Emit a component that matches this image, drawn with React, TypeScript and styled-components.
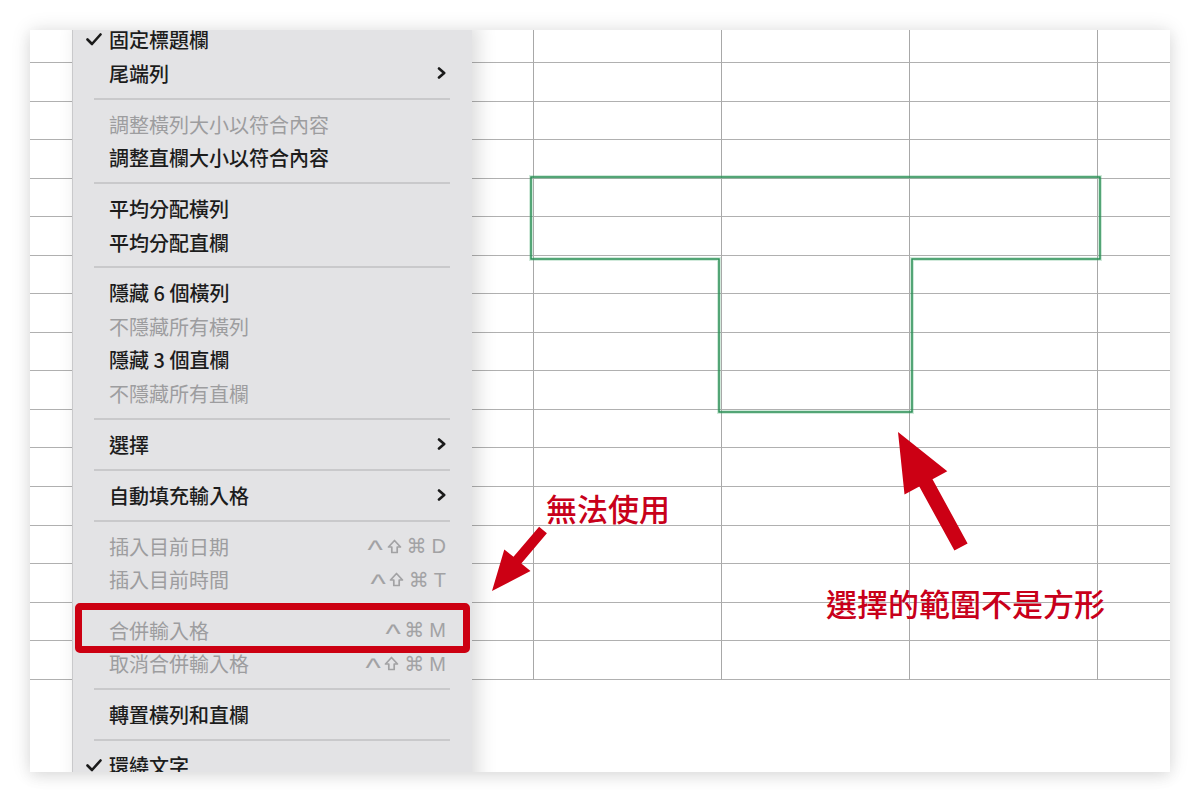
import React from 'react';
import styled, { createGlobalStyle } from 'styled-components';

type MenuEntry =
  | { kind: 'item'; label: string; checked?: boolean; disabled?: boolean; submenu?: boolean; keys?: string[] }
  | { kind: 'sep' };

const menu: MenuEntry[] = [
  { kind: 'item', label: '固定標題欄', checked: true },
  { kind: 'item', label: '尾端列', submenu: true },
  { kind: 'sep' },
  { kind: 'item', label: '調整橫列大小以符合內容', disabled: true },
  { kind: 'item', label: '調整直欄大小以符合內容' },
  { kind: 'sep' },
  { kind: 'item', label: '平均分配橫列' },
  { kind: 'item', label: '平均分配直欄' },
  { kind: 'sep' },
  { kind: 'item', label: '隱藏 6 個橫列' },
  { kind: 'item', label: '不隱藏所有橫列', disabled: true },
  { kind: 'item', label: '隱藏 3 個直欄' },
  { kind: 'item', label: '不隱藏所有直欄', disabled: true },
  { kind: 'sep' },
  { kind: 'item', label: '選擇', submenu: true },
  { kind: 'sep' },
  { kind: 'item', label: '自動填充輸入格', submenu: true },
  { kind: 'sep' },
  { kind: 'item', label: '插入目前日期', disabled: true, keys: ['^', 'shift', '⌘', 'D'] },
  { kind: 'item', label: '插入目前時間', disabled: true, keys: ['^', 'shift', '⌘', 'T'] },
  { kind: 'sep' },
  { kind: 'item', label: '合併輸入格', disabled: true, keys: ['^', '⌘', 'M'] },
  { kind: 'item', label: '取消合併輸入格', disabled: true, keys: ['^', 'shift', '⌘', 'M'] },
  { kind: 'sep' },
  { kind: 'item', label: '轉置橫列和直欄' },
  { kind: 'sep' },
  { kind: 'item', label: '環繞文字', checked: true },
];

// spreadsheet geometry
const COLS = 7;
const ROWS = 17;

const ShiftIcon = () => (
  <svg width="15" height="15" viewBox="0 0 15 15">
    <path d="M7.5 1.5 L13.5 8 H10.2 V13.5 H4.8 V8 H1.5 Z" fill="none" stroke="#a2a2a4" strokeWidth="1.7" strokeLinejoin="round" />
  </svg>
);

const App: React.FC = () => {
  return (
    <>
      <GlobalStyle />
      <Page>
        <Shot>
          <Sheet>
            {Array.from({ length: ROWS * COLS }).map((_, i) => (
              <Cell key={i} $lastCol={i % COLS === COLS - 1} />
            ))}
          </Sheet>

          <Drawing viewBox="0 0 1140 742" width={1140} height={742}>
            {/* non rectangular selection */}
            <path
              d="M501 147 H1070 V229 H882 V382 H689 V229 H501 Z"
              fill="none"
              stroke="rgba(70,170,110,0.25)"
              strokeWidth={4}
            />
            <path
              d="M501 147 H1070 V229 H882 V382 H689 V229 H501 Z"
              fill="none"
              stroke="#2a8f55"
              strokeWidth={1.5}
            />
            {/* small arrow to the menu */}
            <polygon
              points="462,561 500.5,541 491.3,533.4 516.9,503.2 509.1,496.8 483.5,526.8 474.3,519.4"
              fill="#cc0014"
            />
            {/* big arrow to the selection */}
            <polygon
              points="868,402 917.3,441.2 902.5,449.3 937.6,513.4 924.4,520.6 889.3,456.5 874.5,464.6"
              fill="#cc0014"
            />
          </Drawing>

          <Note $left={516} $top={458}>無法使用</Note>
          <Note $left={796} $top={553}>選擇的範圍不是方形</Note>

          <Menu>
            {menu.map((entry, i) =>
              entry.kind === 'sep' ? (
                <Separator key={i} />
              ) : (
                <MenuItem key={i} $disabled={entry.disabled}>
                  <CheckSlot>
                    {entry.checked && (
                      <svg width="16" height="13" viewBox="0 0 16 13">
                        <path d="M1.5 6.5 L6 11 L14.5 1.5" fill="none" stroke="#1a1a1a" strokeWidth="2.6" strokeLinecap="round" strokeLinejoin="round" />
                      </svg>
                    )}
                  </CheckSlot>
                  <Label>{entry.label}</Label>
                  {entry.submenu && (
                    <svg width="9" height="12" viewBox="0 0 9 12">
                      <path d="M2 1.5 L7.2 6 L2 10.5" fill="none" stroke="#1a1a1a" strokeWidth="2.6" strokeLinecap="round" strokeLinejoin="round" />
                    </svg>
                  )}
                  {entry.keys && (
                    <Keys>
                      {entry.keys.map((k, j) =>
                        k === 'shift' ? (
                          <ShiftIcon key={j} />
                        ) : (
                          <Key key={j} $caret={k === '^'}>{k}</Key>
                        )
                      )}
                    </Keys>
                  )}
                </MenuItem>
              )
            )}
          </Menu>

          <Highlight />
        </Shot>
      </Page>
    </>
  );
};

const GlobalStyle = createGlobalStyle`
  html, body {
    margin: 0;
    padding: 0;
    background: #ffffff;
  }
  body {
    font-family: "Noto Sans CJK TC", "Noto Sans", sans-serif;
  }
`;

const Page = styled.div`
  width: 1200px;
  height: 803px;
  padding: 30px;
  box-sizing: border-box;
  background: #ffffff;
`;

const Shot = styled.div`
  position: relative;
  width: 1140px;
  height: 742px;
  overflow: hidden;
  background: #ffffff;
  box-shadow: 0 0 18px rgba(0, 0, 0, 0.13), 0 6px 14px rgba(0, 0, 0, 0.06);
`;

const Sheet = styled.div`
  display: grid;
  grid-template-columns: 128px repeat(5, 188px) 1fr;
  grid-template-rows: 33px repeat(16, 38.56px);
`;

const Cell = styled.div<{ $lastCol?: boolean }>`
  box-sizing: border-box;
  border-bottom: 1px solid #b0b0b0;
  border-right: ${({ $lastCol }) => ($lastCol ? 'none' : '1px solid #a8a8a8')};
`;

const Drawing = styled.svg`
  position: absolute;
  left: 0;
  top: 0;
  pointer-events: none;
`;

const Note = styled.div<{ $left: number; $top: number }>`
  position: absolute;
  left: ${({ $left }) => $left}px;
  top: ${({ $top }) => $top}px;
  font-family: "Noto Sans CJK TC", sans-serif;
  font-size: 31px;
  line-height: 40px;
  font-weight: 500;
  color: #c8001a;
  white-space: nowrap;
`;

const Menu = styled.div`
  position: absolute;
  left: 42px;
  top: -7px;
  width: 400px;
  height: 800px;
  box-sizing: border-box;
  background: #e3e3e5;
  border-left: 1px solid #c9c9cb;
  box-shadow: 6px 0 18px rgba(0, 0, 0, 0.14);
`;

const MenuItem = styled.div<{ $disabled?: boolean }>`
  display: flex;
  align-items: center;
  height: 33.5px;
  padding-right: 26px;
  font-family: "Noto Sans CJK TC", sans-serif;
  font-size: 20px;
  font-weight: ${({ $disabled }) => ($disabled ? 400 : 500)};
  color: ${({ $disabled }) => ($disabled ? '#9d9d9f' : '#1c1c1c')};
`;

const CheckSlot = styled.div`
  width: 36px;
  display: flex;
  align-items: center;
  padding-left: 13px;
  box-sizing: border-box;
`;

const Label = styled.span`
  flex: 1;
  white-space: nowrap;
`;

const Keys = styled.span`
  display: flex;
  align-items: center;
  gap: 5px;
  color: #a2a2a4;
`;

const Key = styled.span<{ $caret?: boolean }>`
  font-family: "Liberation Sans", "DejaVu Sans", sans-serif;
  font-size: ${({ $caret }) => ($caret ? '26px' : '20px')};
  line-height: 1;
  position: relative;
  top: ${({ $caret }) => ($caret ? '4px' : '0')};
  transform: ${({ $caret }) => ($caret ? 'scaleX(1.25)' : 'none')};
`;

const Separator = styled.div`
  height: 17.4px;
  display: flex;
  align-items: center;
  padding: 0 22px 0 21px;

  &::after {
    content: '';
    flex: 1;
    height: 2px;
    background: #c9c9cb;
  }
`;

const Highlight = styled.div`
  position: absolute;
  left: 45px;
  top: 573px;
  width: 395px;
  height: 50px;
  box-sizing: border-box;
  border: 7px solid #cc0012;
  border-radius: 5px;
`;

export default App;
